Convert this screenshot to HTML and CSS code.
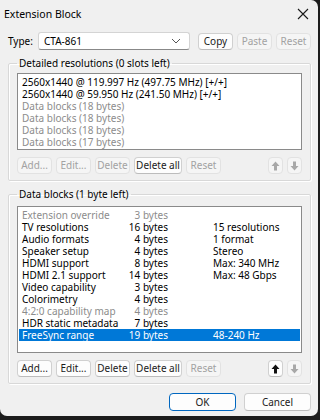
FILE: index.html
```html
<!DOCTYPE html>
<html lang="en">
<head>
    <meta charset="UTF-8">
    <title>Extension Block</title>
    <link rel="stylesheet" href="styles.css">
</head>
<body>
    <div class="window">
        <!-- Title bar -->
        <div class="titlebar">
            <span class="title">Extension Block</span>
            <svg class="close" width="12" height="12" viewBox="0 0 12 12">
                <path d="M1 1 L11 11 M11 1 L1 11" stroke="#1a1a1a" stroke-width="1.1" fill="none"/>
            </svg>
        </div>

        <!-- Type selector -->
        <div class="type-row">
            <span class="type-label">Type:</span>
            <div class="combo">
                <span>CTA-861</span>
                <svg width="10" height="6" viewBox="0 0 10 6">
                    <path d="M1 1 L5 5 L9 1" stroke="#555" stroke-width="1" fill="none"/>
                </svg>
            </div>
            <button class="btn">Copy</button>
            <button class="btn" disabled>Paste</button>
            <button class="btn" disabled>Reset</button>
        </div>

        <!-- Detailed resolutions -->
        <fieldset class="group group-top">
            <legend>Detailed resolutions (0 slots left)</legend>
            <div class="list list-short">
                <div class="row">2560x1440 @ 119.997 Hz (497.75 MHz) [+/+]</div>
                <div class="row">2560x1440 @ 59.950 Hz (241.50 MHz) [+/+]</div>
                <div class="row dim">Data blocks (18 bytes)</div>
                <div class="row dim">Data blocks (18 bytes)</div>
                <div class="row dim">Data blocks (18 bytes)</div>
                <div class="row dim">Data blocks (17 bytes)</div>
            </div>
            <div class="btn-row">
                <button class="btn sm" disabled>Add...</button>
                <button class="btn sm" disabled>Edit...</button>
                <button class="btn sm" disabled>Delete</button>
                <button class="btn wide">Delete all</button>
                <button class="btn sm" disabled>Reset</button>
                <span class="spacer"></span>
                <button class="btn arrow" disabled><svg width="9" height="10" viewBox="0 0 9 10"><path d="M4.5 0.5 L8.5 5 L6 5 L6 9.5 L3 9.5 L3 5 L0.5 5 Z"/></svg></button>
                <button class="btn arrow" disabled><svg width="9" height="10" viewBox="0 0 9 10"><path d="M4.5 9.5 L8.5 5 L6 5 L6 0.5 L3 0.5 L3 5 L0.5 5 Z"/></svg></button>
            </div>
        </fieldset>

        <!-- Data blocks -->
        <fieldset class="group">
            <legend>Data blocks (1 byte left)</legend>
            <div class="list list-tall" id="blocks"></div>
            <div class="btn-row">
                <button class="btn sm">Add...</button>
                <button class="btn sm">Edit...</button>
                <button class="btn sm">Delete</button>
                <button class="btn wide">Delete all</button>
                <button class="btn sm" disabled>Reset</button>
                <span class="spacer"></span>
                <button class="btn arrow"><svg width="9" height="10" viewBox="0 0 9 10"><path d="M4.5 0.5 L8.5 5 L6 5 L6 9.5 L3 9.5 L3 5 L0.5 5 Z"/></svg></button>
                <button class="btn arrow" disabled><svg width="9" height="10" viewBox="0 0 9 10"><path d="M4.5 9.5 L8.5 5 L6 5 L6 0.5 L3 0.5 L3 5 L0.5 5 Z"/></svg></button>
            </div>
        </fieldset>

        <div class="footer">
            <button class="btn big default">OK</button>
            <button class="btn big">Cancel</button>
        </div>
    </div>

    <script>
        // name, size, info, state
        var blocks = [
            ["Extension override", "3 bytes", "", "dim"],
            ["TV resolutions", "16 bytes", "15 resolutions"],
            ["Audio formats", "4 bytes", "1 format"],
            ["Speaker setup", "4 bytes", "Stereo"],
            ["HDMI support", "8 bytes", "Max: 340 MHz"],
            ["HDMI 2.1 support", "14 bytes", "Max: 48 Gbps"],
            ["Video capability", "3 bytes", ""],
            ["Colorimetry", "4 bytes", ""],
            ["4:2:0 capability map", "4 bytes", "", "dim"],
            ["HDR static metadata", "7 bytes", ""],
            ["FreeSync range", "19 bytes", "48-240 Hz", "selected"]
        ];

        document.getElementById('blocks').innerHTML = blocks.map(function (b) {
            return '<div class="row cols ' + (b[3] || '') + '">' +
                '<span class="c-name">' + b[0] + '</span>' +
                '<span class="c-size">' + b[1] + '</span>' +
                '<span class="c-info">' + b[2] + '</span></div>';
        }).join('');
    </script>
</body>
</html>
```

FILE: styles.css
```css
html, body { margin: 0; padding: 0; background: #1c1c1c; }
body { width: 320px; height: 420px; overflow: hidden; font-family: "Noto Sans", sans-serif; font-size: 10px; color: #000; }

.window { width: 318px; height: 416px; background: #f0f0f0; border-radius: 0 7px 7px 7px; box-sizing: border-box; padding: 0 7px 0 8px; }

.titlebar { height: 27px; display: flex; align-items: center; justify-content: space-between; margin-left: -4px; padding-right: 2px; }
.title { font-size: 10.5px; }

.type-row { display: flex; align-items: center; height: 18px; margin-top: 5px; }
.type-label { width: 30px; }
.combo { width: 152px; height: 18px; box-sizing: border-box; background: #fff; border: 1px solid #d4d4d4; border-bottom-color: #888; border-radius: 3px; display: flex; align-items: center; justify-content: space-between; padding: 0 8px 0 5px; margin-right: 8px; }

.btn { font-family: inherit; font-size: 10px; height: 17px; line-height: 15px; padding: 0; box-sizing: border-box; background: #fdfdfd; color: #1a1a1a; border: 1px solid #d0d0d0; border-bottom-color: #bcbcbc; border-radius: 4px; margin-right: 4px; width: 35px; white-space: nowrap; }
.btn:disabled { background: #f5f5f5; color: #a2a2a2; border-color: #e2e2e2; }
.type-row .btn:last-child { margin-right: 0; }

.group { margin: 6px 0 0 0; padding: 0 8px 6px 8px; border: 1px solid #d8d8d8; border-radius: 2px; box-shadow: inset 1px 1px 0 #fff, 1px 1px 0 #fff; }
.group legend { padding: 0 2px; margin-left: 0; line-height: 14px; }

.list { background: #fff; border: 1px solid #8a8a8a; box-sizing: border-box; padding: 2px 1px; margin-top: 3px; }
.list-short { height: 77px; }
.list-tall { height: 147px; margin-top: 5px; }
.row { height: 12px; line-height: 12px; padding-left: 3px; white-space: nowrap; }
.row.dim { color: #8c8c8c; }
.row.selected { background: #0078d7; color: #fff; }
.cols { display: flex; }
.c-name { width: 100px; }
.c-size { width: 46px; text-align: right; }
.c-info { margin-left: 45px; }

.btn-row { display: flex; align-items: center; margin-top: 7px; height: 17px; }
.btn.wide { width: 48px; }
.spacer { flex: 1; }
.btn.arrow { width: 15px; display: flex; align-items: center; justify-content: center; fill: #111; }
.btn.arrow:disabled { fill: #a8a8a8; }
.btn.arrow:last-child { margin-right: 0; }

.footer { display: flex; justify-content: flex-end; margin-top: 9px; }
.btn.big { width: 67px; height: 18px; margin-right: 0; margin-left: 8px; }
.btn.default { border: 1px solid #0067c0; }
```
